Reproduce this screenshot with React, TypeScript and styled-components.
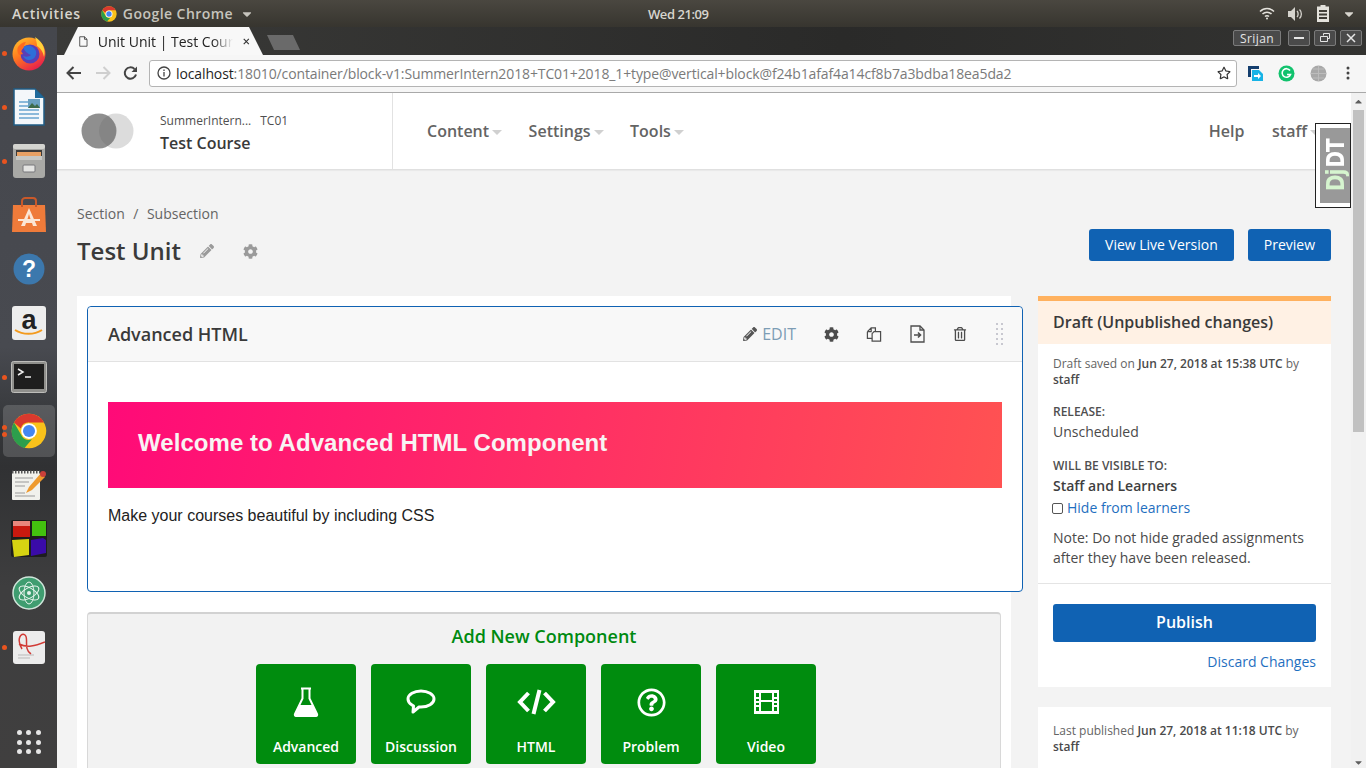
import styled, { createGlobalStyle } from 'styled-components'
import { FaCog, FaPencilAlt, FaRegQuestionCircle, FaRegStar, FaRegTrashAlt, FaCaretDown, FaCaretUp } from 'react-icons/fa'

const Global = createGlobalStyle`
  html, body { margin: 0; padding: 0; height: 768px; overflow: hidden; }
  * { box-sizing: border-box; }
  body { font-family: 'Open Sans', 'Noto Sans', sans-serif; color: #414141; }
`

const Screen = styled.div`
  width: 1366px;
  height: 768px;
  display: flex;
  flex-flow: column;
  overflow: hidden;
`
const TopBar = styled.div`
  height: 27px;
  flex: none;
  display: grid;
  grid-template-columns: 648px auto 1fr;
  align-items: center;
  background: linear-gradient(#4a4740, #37352f);
  color: #d8d5ce;
  font-size: 14px;
  font-weight: 600;
`
const Clock = styled.span`
  font-size: 13px;
  letter-spacing: -0.45px;
`
const TopLeft = styled.div`
  display: flex;
  align-items: center;
  padding-left: 12px;
  letter-spacing: 0.75px;
  span { white-space: nowrap; }
`
const AppName = styled.div`
  display: flex;
  align-items: center;
  gap: 6px;
  margin-left: 20px;
  color: #c6c4bd;
  letter-spacing: 0.45px;
  svg:last-child { margin-left: 1px; }
`
const Tray = styled.div`
  display: flex;
  align-items: center;
  justify-content: flex-end;
  gap: 13px;
  padding-right: 10px;
`
const Body = styled.div`
  flex: 1;
  display: flex;
  min-height: 0;
`
const Dock = styled.div`
  width: 57px;
  flex: none;
  display: flex;
  flex-flow: column;
  align-items: center;
  background: linear-gradient(#45474d 0, #484a50 320px, #35373a 400px, #303133 440px, #3e3e3f 560px, #403f3f 100%);
`
const DockItem = styled.div<{ $active?: boolean }>`
  position: relative;
  width: 52px;
  height: 52px;
  margin-bottom: 2px;
  display: flex;
  align-items: center;
  justify-content: center;
  border-radius: 5px;
  background: ${({ $active }) => ($active ? 'rgba(255,255,255,0.16)' : 'transparent')};
`
const Dot = styled.i<{ $top: number }>`
  position: absolute;
  left: -1px;
  top: ${({ $top }) => $top}px;
  width: 5px;
  height: 5px;
  border-radius: 50%;
  background: #e9541f;
`
const AppGrid = styled.div`
  display: grid;
  grid-template-columns: repeat(3, 5px);
  gap: 4.5px;
  margin-top: 55px;
  i { width: 5px; height: 5px; border-radius: 50%; background: #e6e6e6; }
`
const Chrome = styled.div`
  flex: 1;
  min-width: 0;
  display: flex;
  flex-flow: column;
`
const TabStrip = styled.div`
  height: 28px;
  flex: none;
  display: flex;
  align-items: flex-end;
  padding-left: 7px;
  background: linear-gradient(90deg, #3a3a38, #2a2a29 60%, #333331);
`
const Tab = styled.div`
  width: 199px;
  height: 28px;
  display: flex;
  align-items: center;
  padding: 0 13px 0 15px;
  clip-path: polygon(0 100%, 14px 0, 185px 0, 199px 100%);
  background: #f8f8f8;
  color: #222;
  font-size: 14px;
  gap: 10px;
`
const TabTitle = styled.span`
  flex: 1;
  white-space: nowrap;
  mask-image: linear-gradient(90deg, #000 85%, transparent);
`
const NewTab = styled.div`
  width: 33px;
  height: 15px;
  margin: 0 0 5px 4px;
  clip-path: polygon(0 0, 26px 0, 33px 100%, 7px 100%);
  background: #6a6a6a;
`
const WinControls = styled.div`
  margin-left: auto;
  align-self: flex-start;
  padding: 3px 4px 0 0;
  display: flex;
  gap: 4px;
`
const WinBtn = styled.div<{ $wide?: boolean }>`
  width: ${({ $wide }) => ($wide ? '48px' : '22px')};
  height: 16px;
  margin-right: ${({ $wide }) => ($wide ? '3px' : '0')};
  display: flex;
  align-items: center;
  justify-content: center;
  border: 1px solid #7b7b7b;
  border-radius: 2px;
  background: #4a4a4a;
  color: #e6e6e6;
  font-size: 12px;
  letter-spacing: 0.4px;
`
const Toolbar = styled.div`
  height: 38px;
  flex: none;
  display: flex;
  align-items: center;
  padding: 0 7px 1px 0;
  background: #f6f6f6;
  border-bottom: 1px solid #a9a9a9;
`
const NavBtn = styled.div<{ $w: number }>`
  width: ${({ $w }) => $w}px;
  display: flex;
  justify-content: center;
  flex: none;
`
const Omnibox = styled.div`
  width: 1088px;
  height: 27px;
  margin: 0 2px 0 3px;
  flex: none;
  display: flex;
  align-items: center;
  padding: 0 5px 0 7px;
  background: #fff;
  border: 1px solid #b4b4b4;
  border-radius: 3px;
  font-size: 14px;
  color: #7a7a7a;
  gap: 5px;
`
const Url = styled.div`
  flex: 1;
  white-space: nowrap;
  letter-spacing: -0.12px;
  b { font-weight: 400; color: #1f1f1f; }
`
const Viewport = styled.div`
  position: relative;
  flex: 1;
  min-height: 0;
  display: flex;
  background: #f3f3f3;
`
const Page = styled.div`
  flex: 1;
  min-width: 0;
  overflow: hidden;
`
const Scrollbar = styled.div`
  width: 15px;
  flex: none;
  display: flex;
  flex-flow: column;
  align-items: center;
  background: #f1f1f1;
  color: #5e5e5e;
  padding-top: 3px;
`
const Thumb = styled.div`
  width: 11px;
  height: 322px;
  margin: 3px 0 auto;
  background: #c1c1c1;
`
const Header = styled.header`
  height: 77px;
  display: flex;
  background: #fff;
  border-bottom: 1px solid #e0e0e0;
  box-shadow: 0 1px 1px rgba(0, 0, 0, 0.04);
`
const CourseBlock = styled.div`
  width: 336px;
  flex: none;
  display: flex;
  align-items: center;
  padding-left: 24px;
  border-right: 1px solid #e2e2e2;
`
const Course = styled.div`
  margin-left: 26px;
  padding-top: 4px;
`
const CourseOrg = styled.div`
  font-size: 12px;
  line-height: 20px;
  color: #4f4f4f;
  span { margin-left: 9px; }
`
const CourseName = styled.div`
  font-size: 16px;
  font-weight: 600;
  line-height: 24px;
  color: #3a3a3a;
`
const Nav = styled.nav`
  flex: 1;
  display: flex;
  align-items: center;
  gap: 26.5px;
  padding: 0 31px 0 34px;
`
const NavItem = styled.div<{ $push?: boolean; $plain?: boolean }>`
  display: flex;
  align-items: center;
  margin-left: ${({ $push }) => ($push ? 'auto' : '0')};
  margin-right: ${({ $plain }) => ($plain ? '1px' : '0')};
  font-size: 16px;
  font-weight: 600;
  color: #646464;
  &::after {
    content: '';
    display: ${({ $plain }) => ($plain ? 'none' : 'block')};
    margin: 3px 0 0 3px;
    border: 5px solid transparent;
    border-top-color: #d0d0d0;
    border-bottom: 0;
  }
`
const Djdt = styled.div`
  position: absolute;
  top: 30px;
  right: 15px;
  width: 36px;
  height: 85px;
  padding: 4px 0 4px 4px;
  background: #fff;
  border: 1px solid #222;
  display: flex;
`
const DjdtInner = styled.div`
  flex: 1;
  background: #999;
  display: flex;
  align-items: center;
  justify-content: center;
  writing-mode: vertical-rl;
  transform: rotate(180deg);
  font-family: 'DejaVu Sans', sans-serif;
  font-size: 20px;
  font-weight: 700;
  letter-spacing: -1px;
  color: #fff;
  div { transform: scale(1.25, 1); }
  span { color: #d6f5cf; margin-bottom: 2px; display: inline-block; }
`
const SubHead = styled.div`
  display: flex;
  justify-content: space-between;
  align-items: flex-start;
  padding: 34px 20px 0;
  height: 126px;
`
const Crumbs = styled.div`
  font-size: 14px;
  line-height: 20px;
  color: #646464;
  span { margin: 0 8.5px; }
`
const TitleRow = styled.div`
  display: flex;
  align-items: center;
  margin-top: 9px;
  height: 34px;
  h1 { margin: 0; font-size: 24px; font-weight: 600; color: #3a3a3a; }
  svg { color: #9a9a9a; margin-top: 2px; }
`
const TitlePencil = styled(FaPencilAlt)`
  margin-left: 19px;
`
const TitleGear = styled(FaCog)`
  margin-left: 29px;
`
const Actions = styled.div`
  display: flex;
  gap: 14px;
  margin-top: 25px;
`
const Button = styled.div`
  height: 32px;
  display: flex;
  align-items: center;
  padding: 0 16px 2px;
  background: #1062b3;
  border-radius: 3px;
  color: #fff;
  font-size: 14px;
`
const Columns = styled.div`
  display: flex;
  align-items: flex-start;
  padding-left: 20px;
`
const MainCol = styled.div`
  width: 934px;
  flex: none;
  padding: 10px;
  background: #fff;
`
const Xblock = styled.div`
  position: relative;
  width: 936px;
  height: 286px;
  border: 1px solid #1062b3;
  border-radius: 4px;
  background: #fff;
`
const XblockHead = styled.div`
  height: 55px;
  display: flex;
  align-items: center;
  padding: 0 19px 0 20px;
  background: #f8f8f8;
  border-bottom: 1px solid #e2e2e2;
  border-radius: 4px 4px 0 0;
  h2 { margin: 0; font-size: 18px; font-weight: 600; color: #3a3a3a; }
`
const XActions = styled.div`
  margin-left: auto;
  display: flex;
  align-items: center;
  color: #4d4d4d;
`
const EditBtn = styled.div`
  display: flex;
  align-items: center;
  gap: 5px;
  font-size: 16px;
  color: #7d9db5;
  svg { color: #555; }
`
const IconSlot = styled.div`
  width: 16px;
  margin-left: 27px;
  display: flex;
  justify-content: center;
`
const Grip = styled.div`
  display: grid;
  grid-template-columns: repeat(2, 2px);
  gap: 3px;
  margin-left: 28px;
  i { width: 2px; height: 2px; background: #c8c8d0; }
`
const XblockBody = styled.div`
  padding: 40px 20px 0;
`
const Banner = styled.div`
  height: 86px;
  display: flex;
  align-items: center;
  padding: 0 0 4px 30px;
  background: linear-gradient(100deg, #ff0a78, #ff5252);
  color: #f8f3f3;
  font-family: 'Liberation Sans', Arial, sans-serif;
  font-size: 24px;
  font-weight: 700;
  letter-spacing: 0.05px;
`
const Lead = styled.p`
  margin: 18px 0 0;
  font-family: 'Liberation Sans', Arial, sans-serif;
  font-size: 16px;
  line-height: 19px;
  color: #222;
`
const AddBox = styled.div`
  width: 914px;
  margin-top: 20px;
  height: 220px;
  padding-top: 9px;
  background: #f2f2f2;
  border: 1px solid #d8d8d8;
  border-top: 2px solid #d2d2d2;
  border-radius: 4px;
  text-align: center;
`
const AddTitle = styled.div`
  font-size: 18px;
  font-weight: 600;
  line-height: 26px;
  color: #008a10;
`
const AddRow = styled.div`
  display: flex;
  justify-content: center;
  gap: 15px;
  margin-top: 15px;
  padding-right: 16px;
`
const AddBtn = styled.div`
  width: 100px;
  height: 100px;
  display: flex;
  flex-flow: column;
  align-items: center;
  padding-top: 20px;
  background: #008c0e;
  border-radius: 4px;
  color: #fff;
  font-size: 14px;
  font-weight: 600;
`
const AddIcon = styled.div`
  height: 36px;
  display: flex;
  align-items: center;
  justify-content: center;
`
const AddLabel = styled.div`
  margin-top: 17px;
`
const SideCol = styled.aside`
  width: 293px;
  flex: none;
  margin-left: 27px;
`
const SideCard = styled.section<{ $top?: boolean }>`
  background: #fff;
  margin-bottom: 20px;
  border-top: ${({ $top }) => ($top ? '5px solid #ffb15e' : '0')};
`
const SideHead = styled.div`
  height: 43px;
  display: flex;
  align-items: center;
  padding: 0 0 1px 15px;
  background: #fff1e4;
  font-size: 16px;
  font-weight: 600;
  color: #3a3a3a;
`
const SideBody = styled.div`
  padding: 12px 15px 15px;
  border-bottom: 1px solid #e4e4e4;
`
const Meta = styled.div`
  font-size: 12px;
  line-height: 16px;
  color: #646464;
  b { font-weight: 600; color: #4a4a4a; }
`
const Label = styled.div`
  margin-top: 15px;
  font-size: 12px;
  font-weight: 600;
  line-height: 17px;
  color: #4f4f4f;
`
const Value = styled.div<{ $strong?: boolean }>`
  margin-top: 2px;
  font-size: 14px;
  line-height: 20px;
  font-weight: ${({ $strong }) => ($strong ? 600 : 400)};
  color: ${({ $strong }) => ($strong ? '#3e3e3e' : '#4a4a4a')};
`
const HideRow = styled.div`
  display: flex;
  align-items: center;
  gap: 4px;
  margin: 2px 0 0 -1px;
  font-size: 14px;
  line-height: 20px;
  color: #1f6fc0;
  i { width: 11px; height: 11px; border: 1px solid #555; border-radius: 2px; background: #fff; }
`
const Note = styled.div`
  margin-top: 10px;
  font-size: 14px;
  line-height: 20px;
  color: #4a4a4a;
`
const SideFoot = styled.div`
  padding: 20px 15px 15px;
  text-align: right;
`
const Publish = styled.div`
  height: 38px;
  display: flex;
  align-items: center;
  justify-content: center;
  padding-bottom: 2px;
  background: #1062b3;
  border-radius: 3px;
  color: #fff;
  font-size: 16px;
  font-weight: 600;
`
const Discard = styled.div`
  margin-top: 10px;
  font-size: 14px;
  line-height: 20px;
  color: #1f6fc0;
`
const LastPub = styled.div`
  padding: 16px 15px 20px;
  height: 80px;
`

function ChromeLogo({ size }: { size: number }) {
  return (
    <svg width={size} height={size} viewBox="0 0 48 48">
      <circle cx="24" cy="24" r="23" fill="#f9c21b" />
      <path d="M24 1A23 23 0 0 1 44 12.500H24a11.500 11.500 0 0 0-11 8L4 12.500A23 23 0 0 1 24 1z" fill="#d9392e" />
      <path d="M4 12.500l11 19a11.500 11.500 0 0 0 13 3.500L18 46.500A23 23 0 0 1 4 12.500z" fill="#2c9e4c" />
      <circle cx="24" cy="24" r="10.500" fill="#fff" />
      <circle cx="24" cy="24" r="8" fill="#4586f1" />
    </svg>
  )
}

function Firefox() {
  return (
    <svg width="36" height="36" viewBox="0 0 36 36">
      <defs>
        <linearGradient id="ff" x1="0" y1="0" x2="0.6" y2="1">
          <stop offset="0" stopColor="#ffcb2e" />
          <stop offset="0.5" stopColor="#ff7a1f" />
          <stop offset="1" stopColor="#e8234a" />
        </linearGradient>
      </defs>
      <circle cx="18" cy="19" r="16.500" fill="url(#ff)" />
      <path d="M24 2c8 5 11 13 9 20-1-6-4-9-7-11 0-3-1-6-2-9z" fill="#ffd23a" />
      <circle cx="19" cy="19" r="9.500" fill="#5a3fb5" />
      <path d="M12 12c5-3 11-1 13 4 1 5-2 9-7 9-3 0-5-2-6-4 3 1 6 1 8-1-3-1-6-3-8-8z" fill="#2e6fd8" />
      <path d="M7 12c2-3 5-5 8-5-1 2-2 3-2 5l-3 4 2 3-4 1c-2-3-2-6-1-8z" fill="#ff6a1f" />
    </svg>
  )
}

function Writer() {
  return (
    <svg width="32" height="38" viewBox="0 0 32 38">
      <path d="M1 1h21l9 9v27H1z" fill="#f4f7fa" stroke="#1f5c85" strokeWidth="1.500" />
      <path d="M22 1l9 9h-9z" fill="#1f6a9c" />
      <path d="M6 14h10M6 18h10M6 22h20M6 26h20M6 30h20" stroke="#6aa5cf" strokeWidth="1.500" />
      <rect x="15" y="11" width="12" height="9" fill="#6aa0c0" />
      <path d="M15 20l4-5 3 3 2-2 3 4z" fill="#3d6b4a" />
    </svg>
  )
}

function Cabinet() {
  return (
    <svg width="34" height="36" viewBox="0 0 34 36">
      <rect x="1" y="1" width="32" height="34" rx="3" fill="#a9a9a6" />
      <rect x="1" y="1" width="32" height="5" rx="2" fill="#d4d4d0" />
      <rect x="4" y="7" width="26" height="10" fill="#3d3b39" />
      <rect x="5" y="9" width="24" height="4" fill="#e8a063" />
      <rect x="4" y="13" width="26" height="4" fill="#c7c7c3" />
      <rect x="11" y="22" width="12" height="7" rx="1" fill="#e4e4e2" stroke="#77777a" />
    </svg>
  )
}

function Store() {
  return (
    <svg width="34" height="36" viewBox="0 0 34 36">
      <path d="M1 8h32l1 27H0z" fill="#ef7b3a" />
      <path d="M10 10V4c0-2 2-3 3-3h8c2 0 3 1 3 3v6" fill="none" stroke="#c9592a" strokeWidth="2" />
      <path d="M17 11l-8 18h4l1-3h6l1 3h4zM15.500 22l1.500-5 1.500 5z" fill="#fbe6d6" />
      <rect x="6" y="22" width="22" height="2" fill="#fbe6d6" />
    </svg>
  )
}

function HelpBadge() {
  return (
    <svg width="32" height="32" viewBox="0 0 32 32">
      <circle cx="16" cy="16" r="15.500" fill="#3c78ad" />
      <text x="16" y="24" textAnchor="middle" fill="#fff" fontFamily="'Liberation Sans', sans-serif" fontWeight="700" fontSize="23">?</text>
    </svg>
  )
}

function Amazon() {
  return (
    <svg width="34" height="34" viewBox="0 0 34 34">
      <rect width="34" height="34" rx="3" fill="#ededed" />
      <text x="17" y="23" textAnchor="middle" fill="#222" fontFamily="'Liberation Sans', sans-serif" fontWeight="700" fontSize="27">a</text>
      <path d="M3 24c8 5 19 5 27 0" fill="none" stroke="#f39a1d" strokeWidth="2" />
    </svg>
  )
}

function Terminal() {
  return (
    <svg width="36" height="32" viewBox="0 0 36 32">
      <rect x="0.500" y="0.500" width="35" height="31" rx="2" fill="#8f8f8c" stroke="#bdbdba" />
      <rect x="3" y="3" width="30" height="25" fill="#1e1e1e" />
      <path d="M7 8l5 3-5 3" fill="none" stroke="#eee" strokeWidth="1.500" />
      <path d="M14 16h6" stroke="#eee" strokeWidth="1.500" />
    </svg>
  )
}

function Notes() {
  return (
    <svg width="36" height="32" viewBox="0 0 36 32">
      <rect x="1" y="2" width="28" height="29" rx="1" fill="#f1f1ec" />
      <path d="M1 3h28" stroke="#555" strokeWidth="3" strokeDasharray="1.500 1.500" />
      <path d="M4 9h18M4 13h14M4 17h10M4 24h10M4 27h20" stroke="#999" />
      <path d="M15 24l3-6L30 4l4 4-13 13z" fill="#ee9a2e" />
      <circle cx="32" cy="5" r="3" fill="#c9403a" />
    </svg>
  )
}

function Cubes() {
  return (
    <svg width="36" height="38" viewBox="0 0 36 38">
      <rect x="0" y="0" width="36" height="37" rx="2" fill="#141414" opacity="0.75" />
      <rect x="2" y="1" width="17" height="16" fill="#c8190f" />
      <rect x="2" y="1" width="17" height="5" fill="#e8867c" />
      <rect x="21" y="1" width="14" height="15" fill="#43c10f" />
      <path d="M1 20l17-1v16l-15 2z" fill="#d6d312" />
      <path d="M20 20l12-2 3 2v13l-15 3z" fill="#3a0ba8" />
    </svg>
  )
}

function Atom() {
  return (
    <svg width="34" height="34" viewBox="0 0 34 34">
      <circle cx="17" cy="17" r="16" fill="#3f9d70" stroke="#cfe5da" strokeWidth="1.500" />
      <g fill="none" stroke="#e6f3ec" strokeWidth="1">
        <ellipse cx="17" cy="17" rx="11" ry="5" transform="rotate(30 17 17)" />
        <ellipse cx="17" cy="17" rx="11" ry="5" transform="rotate(90 17 17)" />
        <ellipse cx="17" cy="17" rx="11" ry="5" transform="rotate(150 17 17)" />
      </g>
      <circle cx="17" cy="17" r="2" fill="#e6f3ec" />
    </svg>
  )
}

function Reader() {
  return (
    <svg width="32" height="33" viewBox="0 0 32 33">
      <rect width="32" height="33" rx="3" fill="#ececec" />
      <path d="M9 18C3 8 8 1 12 4c4 3-2 14 6 19M6 13c8 4 16 2 26-2" fill="none" stroke="#d13a35" strokeWidth="1.500" />
      <path d="M5 24h16M5 27h12" stroke="#b9b9b9" />
    </svg>
  )
}

function CopyIcon() {
  return (
    <svg width="17" height="17" viewBox="0 0 17 17" fill="none" stroke="#4d4d4d" strokeWidth="1.300">
      <path d="M1.500 5.500l4-4H10v4M1.500 5.500H5.500v-4M1.500 5.500v7h5" />
      <path d="M6.500 7.500l2-2h7v10h-9z" />
    </svg>
  )
}

function MoveIcon() {
  return (
    <svg width="15" height="18" viewBox="0 0 15 18" fill="none" stroke="#4d4d4d" strokeWidth="1.300">
      <path d="M1 1h9l4 4v12H1z" />
      <path d="M10 1v4h4" />
      <path d="M4 10h6M8 7.500L10.500 10 8 12.500" strokeWidth="1.600" />
    </svg>
  )
}

function Flask() {
  return (
    <svg width="26" height="31" viewBox="0 0 26 31" fill="none">
      <path d="M8 1.500h10M9.500 1.500v10L2 27c-.5 1 0 2 1 2h20c1 0 1.500-1 1-2l-7.500-15.500v-10" stroke="#fff" strokeWidth="2" />
      <path d="M6.500 18h13l5 11H1.500z" fill="#fff" />
    </svg>
  )
}

function Bubble() {
  return (
    <svg width="30" height="28" viewBox="0 0 30 28" fill="none" stroke="#fff" strokeWidth="3">
      <path d="M15 3C8 3 2 6.500 2 11c0 2.500 1.500 4.500 4 6l1.500 1-.5 6 6-5h2c7 0 13-3.500 13-8S22 3 15 3z" strokeLinejoin="round" />
    </svg>
  )
}

function CodeGlyph() {
  return (
    <svg width="39" height="26" viewBox="0 0 39 26" fill="none" stroke="#fff" strokeWidth="4">
      <path d="M11.500 4l-8.500 9 8.500 9M27.500 4l8.500 9-8.500 9" />
      <path d="M22.500 1l-6 24" />
    </svg>
  )
}

function FilmGlyph() {
  return (
    <svg width="25" height="24" viewBox="0 0 25 24" fill="#fff">
      <path
        fillRule="evenodd"
        d="M0 0h25v24H0zM2 3v4h3V3zm0 6v2h3V9zm0 4v2h3v-2zm0 4v4h3v-4zM20 3v4h3V3zm0 6v2h3V9zm0 4v2h3v-2zm0 4v4h3v-4zM7 3v7h11V3zm0 9v9h11v-9z"
      />
    </svg>
  )
}

const dock = [
  { el: <Firefox />, dots: [23.5] },
  { el: <Writer />, dots: [23.5] },
  { el: <Cabinet />, dots: [23.5] },
  { el: <Store />, dots: [] },
  { el: <HelpBadge />, dots: [] },
  { el: <Amazon />, dots: [] },
  { el: <Terminal />, dots: [23.5] },
  { el: <ChromeLogo size={36} />, dots: [20, 27], active: true },
  { el: <Notes />, dots: [] },
  { el: <Cubes />, dots: [] },
  { el: <Atom />, dots: [] },
  { el: <Reader />, dots: [23.5] },
]

const addButtons = [
  { label: 'Advanced', icon: <Flask /> },
  { label: 'Discussion', icon: <Bubble /> },
  { label: 'HTML', icon: <CodeGlyph /> },
  { label: 'Problem', icon: <FaRegQuestionCircle size={29} /> },
  { label: 'Video', icon: <FilmGlyph /> },
]

export default function App() {
  return (
    <Screen>
      <Global />
      <TopBar>
        <TopLeft>
          <span>Activities</span>
          <AppName>
            <ChromeLogo size={16} />
            <span>Google Chrome</span>
            <FaCaretDown size={14} />
          </AppName>
        </TopLeft>
        <Clock>Wed 21:09</Clock>
        <Tray>
          <svg width="16" height="13" viewBox="0 0 16 13" fill="none" stroke="#e4e2dc" strokeWidth="1.500">
            <path d="M1 4.500c4-4 10-4 14 0M3.500 7c2.500-2.500 6.500-2.500 9 0M6 9.500c1-1 3-1 4 0" />
            <circle cx="8" cy="11.500" r="1" fill="#e4e2dc" stroke="none" />
          </svg>
          <svg width="16" height="14" viewBox="0 0 16 14" fill="#d5d3cd">
            <path d="M0 4h3l4-4v14l-4-4H0z" />
            <path d="M9 4c1.500 1.500 1.500 4.500 0 6M11.500 2.500c2.500 2.500 2.500 6.500 0 9" fill="none" stroke="#d5d3cd" strokeWidth="1.300" />
          </svg>
          <svg width="12" height="17" viewBox="0 0 12 17" fill="#e4e2dc">
            <path d="M3.500 0h5v1.500H12V17H0V1.500h3.500zM2 5v2h8V5zm0 3.500v2h8v-2zm0 3.500v2h8v-2z" fillRule="evenodd" />
          </svg>
          <FaCaretDown size={14} />
        </Tray>
      </TopBar>
      <Body>
        <Dock>
          {dock.map((d, i) => (
            <DockItem key={i} $active={d.active}>
              {d.dots.map((t) => (
                <Dot key={t} $top={t} />
              ))}
              {d.el}
            </DockItem>
          ))}
          <AppGrid>
            {Array.from({ length: 9 }).map((_, i) => (
              <i key={i} />
            ))}
          </AppGrid>
        </Dock>
        <Chrome>
          <TabStrip>
            <Tab>
              <svg width="12" height="15" viewBox="0 0 12 15" fill="none" stroke="#333" strokeWidth="1.100">
                <path d="M1 1h6.500L11 4.500V14H1zM7.500 1v3.500H11" />
              </svg>
              <TabTitle>Unit Unit | Test Cour</TabTitle>
              <svg width="9" height="9" viewBox="0 0 9 9" stroke="#333" strokeWidth="1.500">
                <path d="M1 1l7 7M8 1L1 8" />
              </svg>
            </Tab>
            <NewTab />
            <WinControls>
              <WinBtn $wide>Srijan</WinBtn>
              <WinBtn>
                <svg width="10" height="2"><rect width="10" height="2" fill="#e6e6e6" /></svg>
              </WinBtn>
              <WinBtn>
                <svg width="10" height="10" viewBox="0 0 10 10" fill="none" stroke="#e6e6e6">
                  <path d="M3.500 2.500v-2h6v5h-2M.5 3.500h7v5h-7z" />
                </svg>
              </WinBtn>
              <WinBtn>
                <svg width="10" height="10" viewBox="0 0 10 10" stroke="#e6e6e6" strokeWidth="1.500">
                  <path d="M1 1l8 8M9 1L1 9" />
                </svg>
              </WinBtn>
            </WinControls>
          </TabStrip>
          <Toolbar>
            <NavBtn $w={34}>
              <svg width="16" height="14" viewBox="0 0 16 14" fill="none" stroke="#444" strokeWidth="2">
                <path d="M15 7H2M7.500 1L1.500 7l6 6" />
              </svg>
            </NavBtn>
            <NavBtn $w={24}>
              <svg width="16" height="14" viewBox="0 0 16 14" fill="none" stroke="#cfcfcf" strokeWidth="2">
                <path d="M1 7h13M8.500 1l6 6-6 6" />
              </svg>
            </NavBtn>
            <NavBtn $w={31}>
              <svg width="15" height="15" viewBox="0 0 15 15" fill="none" stroke="#444" strokeWidth="2">
                <path d="M13 8.500A5.700 5.700 0 1 1 11.500 3" />
                <path d="M14 .5v5.500H8.500" fill="#444" stroke="none" />
              </svg>
            </NavBtn>
            <Omnibox>
              <svg width="14" height="14" viewBox="0 0 14 14" fill="none" stroke="#444" strokeWidth="1.300">
                <circle cx="7" cy="7" r="6" />
                <path d="M7 6v4.500M7 3.500v1.500" />
              </svg>
              <Url>
                <b>localhost</b>:18010/container/block-v1:SummerIntern2018+TC01+2018_1+type@vertical+block@f24b1afaf4a14cf8b7a3bdba18ea5da2
              </Url>
              <FaRegStar size={14} color="#333" />
            </Omnibox>
            <NavBtn $w={32}>
              <svg width="17" height="17" viewBox="0 0 17 17">
                <path d="M1 1h11v3H4v8H1z" fill="#143e6e" />
                <path d="M5 5h7l4 4v7H5z" fill="#17b3e6" />
                <path d="M7 10h4V8l3 3-3 3v-2H7z" fill="#fff" />
              </svg>
            </NavBtn>
            <NavBtn $w={31}>
              <svg width="17" height="17" viewBox="0 0 17 17">
                <circle cx="8.500" cy="8.500" r="8" fill="#11c26d" />
                <path d="M12 5.500a4.300 4.300 0 1 0 .5 4H9" fill="none" stroke="#fff" strokeWidth="1.600" />
              </svg>
            </NavBtn>
            <NavBtn $w={32}>
              <svg width="17" height="17" viewBox="0 0 17 17">
                <circle cx="8.500" cy="8.500" r="8" fill="#a8a8a8" />
                <path d="M1 8.500h15M8.500 1v15M3 4h11M3 13h11" stroke="#bcbcbc" fill="none" />
              </svg>
            </NavBtn>
            <NavBtn $w={28}>
              <svg width="4" height="14" viewBox="0 0 4 14" fill="#444">
                <circle cx="2" cy="2" r="1.500" />
                <circle cx="2" cy="7" r="1.500" />
                <circle cx="2" cy="12" r="1.500" />
              </svg>
            </NavBtn>
          </Toolbar>
          <Viewport>
            <Page>
              <Header>
                <CourseBlock>
                  <svg width="53" height="36" viewBox="0 0 53 36">
                    <circle cx="35" cy="18" r="17.500" fill="#dcdcdc" />
                    <circle cx="18" cy="18" r="17.500" fill="#8f8f8f" />
                    <path d="M26.500 3a17.500 17.500 0 0 1 0 30 17.500 17.500 0 0 1 0-30z" fill="#858585" />
                  </svg>
                  <Course>
                    <CourseOrg>
                      SummerIntern...<span>TC01</span>
                    </CourseOrg>
                    <CourseName>Test Course</CourseName>
                  </Course>
                </CourseBlock>
                <Nav>
                  <NavItem>Content</NavItem>
                  <NavItem>Settings</NavItem>
                  <NavItem>Tools</NavItem>
                  <NavItem $push $plain>Help</NavItem>
                  <NavItem>staff</NavItem>
                </Nav>
              </Header>
              <SubHead>
                <div>
                  <Crumbs>
                    Section<span>/</span>Subsection
                  </Crumbs>
                  <TitleRow>
                    <h1>Test Unit</h1>
                    <TitlePencil size={14} />
                    <TitleGear size={15} />
                  </TitleRow>
                </div>
                <Actions>
                  <Button>View Live Version</Button>
                  <Button>Preview</Button>
                </Actions>
              </SubHead>
              <Columns>
                <MainCol>
                  <Xblock>
                    <XblockHead>
                      <h2>Advanced HTML</h2>
                      <XActions>
                        <EditBtn>
                          <FaPencilAlt size={14} />
                          EDIT
                        </EditBtn>
                        <IconSlot>
                          <FaCog size={15} />
                        </IconSlot>
                        <IconSlot>
                          <CopyIcon />
                        </IconSlot>
                        <IconSlot>
                          <MoveIcon />
                        </IconSlot>
                        <IconSlot>
                          <FaRegTrashAlt size={14} />
                        </IconSlot>
                        <Grip>
                          {Array.from({ length: 10 }).map((_, i) => (
                            <i key={i} />
                          ))}
                        </Grip>
                      </XActions>
                    </XblockHead>
                    <XblockBody>
                      <Banner>Welcome to Advanced HTML Component</Banner>
                      <Lead>Make your courses beautiful by including CSS</Lead>
                    </XblockBody>
                  </Xblock>
                  <AddBox>
                    <AddTitle>Add New Component</AddTitle>
                    <AddRow>
                      {addButtons.map((b) => (
                        <AddBtn key={b.label}>
                          <AddIcon>{b.icon}</AddIcon>
                          <AddLabel>{b.label}</AddLabel>
                        </AddBtn>
                      ))}
                    </AddRow>
                  </AddBox>
                </MainCol>
                <SideCol>
                  <SideCard $top>
                    <SideHead>Draft (Unpublished changes)</SideHead>
                    <SideBody>
                      <Meta>
                        Draft saved on <b>Jun 27, 2018 at 15:38 UTC</b> by <b>staff</b>
                      </Meta>
                      <Label>RELEASE:</Label>
                      <Value>Unscheduled</Value>
                      <Label>WILL BE VISIBLE TO:</Label>
                      <Value $strong>Staff and Learners</Value>
                      <HideRow>
                        <i />
                        Hide from learners
                      </HideRow>
                      <Note>Note: Do not hide graded assignments after they have been released.</Note>
                    </SideBody>
                    <SideFoot>
                      <Publish>Publish</Publish>
                      <Discard>Discard Changes</Discard>
                    </SideFoot>
                  </SideCard>
                  <SideCard>
                    <LastPub>
                      <Meta>
                        Last published <b>Jun 27, 2018 at 11:18 UTC</b> by <b>staff</b>
                      </Meta>
                    </LastPub>
                  </SideCard>
                </SideCol>
              </Columns>
            </Page>
            <Scrollbar>
              <FaCaretUp size={11} />
              <Thumb />
              <FaCaretDown size={11} />
            </Scrollbar>
            <Djdt>
              <DjdtInner>
                <div>
                  <span>Dj</span>DT
                </div>
              </DjdtInner>
            </Djdt>
          </Viewport>
        </Chrome>
      </Body>
    </Screen>
  )
}
